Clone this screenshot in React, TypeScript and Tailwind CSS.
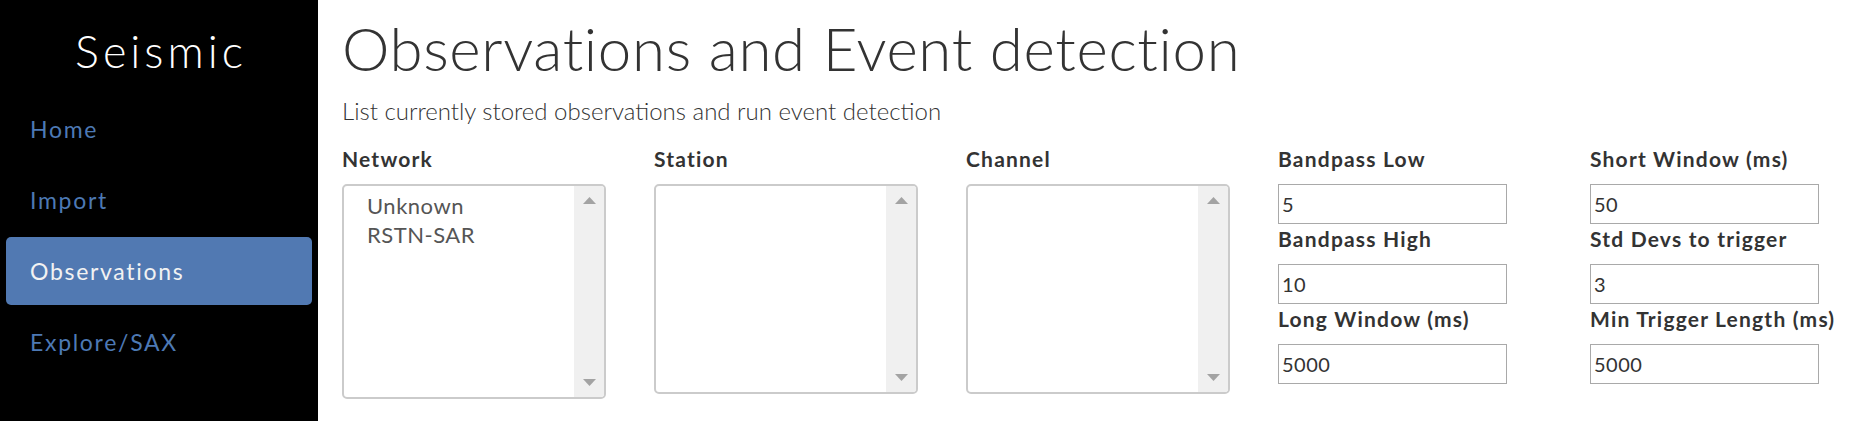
import React from 'react';

const navItems = ['Home', 'Import', 'Observations', 'Explore/SAX'];

function Arrow({ up }: { up?: boolean }) {
  return (
    <svg width="13" height="7" viewBox="0 0 13 7">
      <polygon points={up ? '6.5,0 13,7 0,7' : '0,0 13,0 6.5,7'} fill="#a3a3a3" />
    </svg>
  );
}

function ListBox({ options, size }: { options: string[]; size: string }) {
  return (
    <div className={`flex w-[264px] overflow-hidden rounded-[5px] border-2 border-[#cbcbcb] bg-white ${size}`}>
      <div className="flex-1 pl-[23px] pt-[6px] text-[22px] leading-[28.5px] tracking-[0.5px] text-[#555555]">
        {options.map((o) => (
          <div key={o}>{o}</div>
        ))}
      </div>
      <div className="flex w-[30px] flex-col items-center justify-between bg-[#f0f0f0] py-[11px]">
        <Arrow up />
        <Arrow />
      </div>
    </div>
  );
}

function Label({ children }: { children: React.ReactNode }) {
  return (
    <div className="mb-[10px] text-[21px] font-bold leading-[30px] tracking-[1.2px] text-[#333333]">{children}</div>
  );
}

function Field({ label, value }: { label: string; value: string }) {
  return (
    <div>
      <Label>{label}</Label>
      <input
        className="block h-[40px] w-[229px] border border-[#a9a9a9] bg-white px-[3px] text-[20px] tracking-[0.5px] text-[#333333] outline-none"
        defaultValue={value}
      />
    </div>
  );
}

export default function App() {
  return (
    <div className="flex h-screen w-full bg-white font-[Lato,sans-serif]">
      <aside className="w-[318px] shrink-0 bg-black pt-[24px]">
        <h1 className="pl-[4px] text-center text-[45px] font-light leading-[54px] tracking-[4px] text-white">Seismic</h1>
        <nav className="mt-[17px] flex flex-col gap-[3px] px-[6px]">
          {navItems.map((item) => (
            <a
              key={item}
              href="#"
              className={
                item === 'Observations'
                  ? 'flex h-[68px] items-center rounded-[5px] bg-[#5179b2] pl-[24px] text-[23px] tracking-[1.7px] text-[#f2f2f2]'
                  : 'flex h-[68px] items-center rounded-[5px] pl-[24px] text-[23px] tracking-[1.7px] text-[#4d79b4]'
              }
            >
              {item}
            </a>
          ))}
        </nav>
      </aside>

      <main className="flex-1 pl-[24px] pt-[12px] text-[#333333]">
        <h1 className="text-[60px] font-light leading-[72px] tracking-[0.65px]">Observations and Event detection</h1>
        <p className="mt-[12px] text-[24px] font-light leading-[29px]">
          List currently stored observations and run event detection
        </p>

        <div className="mt-[19px] flex">
          <div className="w-[312px]">
            <Label>Network</Label>
            <ListBox options={['Unknown', 'RSTN-SAR']} size="h-[215px]" />
          </div>
          <div className="w-[312px]">
            <Label>Station</Label>
            <ListBox options={[]} size="h-[210px]" />
          </div>
          <div className="w-[312px]">
            <Label>Channel</Label>
            <ListBox options={[]} size="h-[210px]" />
          </div>
          <div className="w-[312px]">
            <Field label="Bandpass Low" value="5" />
            <Field label="Bandpass High" value="10" />
            <Field label="Long Window (ms)" value="5000" />
          </div>
          <div className="w-[312px]">
            <Field label="Short Window (ms)" value="50" />
            <Field label="Std Devs to trigger" value="3" />
            <Field label="Min Trigger Length (ms)" value="5000" />
          </div>
        </div>
      </main>
    </div>
  );
}
